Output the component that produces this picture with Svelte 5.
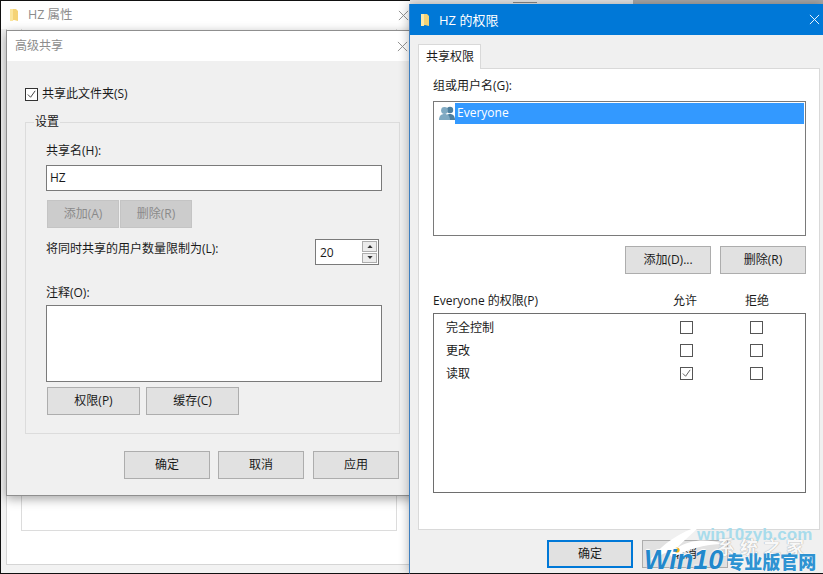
<script>
  const perms = [
    { name: '完全控制', allow: false },
    { name: '更改', allow: false },
    { name: '读取', allow: true },
  ];
</script>

<div class="desktop">
  <!-- back window: HZ 属性 -->
  <section class="win back">
    <header class="title">
      <svg class="folder" viewBox="0 0 10 14"><path d="M1 1h6l2 2v10l-4-1-4 1z" fill="#f5d376"/><path d="M1 1h3v12H1z" fill="#fbe59c"/></svg>
      <span>HZ 属性</span>
      <svg class="close" viewBox="0 0 12 12"><path d="M1 1l10 10M11 1L1 11" stroke="#8a8a8a" fill="none"/></svg>
    </header>
    <div class="back-panel">
      <div class="back-box"></div>
    </div>
  </section>

  <!-- 高级共享 -->
  <section class="win adv">
    <header class="title plain">
      <span>高级共享</span>
      <svg class="close" viewBox="0 0 12 12"><path d="M1 1l10 10M11 1L1 11" stroke="#8a8a8a" fill="none"/></svg>
    </header>
    <div class="adv-body">
      <label class="share-check">
        <span class="check dark"><svg viewBox="0 0 12 12"><path d="M2 6l3 3 5-7" stroke="#333" fill="none"/></svg></span>
        共享此文件夹(S)
      </label>
      <fieldset>
        <legend>设置</legend>
        <div class="lbl">共享名(H):</div>
        <div class="field">HZ</div>
        <div class="btns tight">
          <button class="btn small" disabled>添加(A)</button>
          <button class="btn small" disabled>删除(R)</button>
        </div>
        <div class="limit">
          <span>将同时共享的用户数量限制为(L):</span>
          <div class="spin">
            <span>20</span>
            <div class="arrows">
              <i><svg viewBox="0 0 7 4"><path d="M3.5 0L7 4H0z" fill="#333"/></svg></i>
              <i><svg viewBox="0 0 7 4"><path d="M0 0h7L3.5 4z" fill="#333"/></svg></i>
            </div>
          </div>
        </div>
        <div class="lbl note">注释(O):</div>
        <div class="notes"></div>
        <div class="btns wide">
          <button class="btn mid">权限(P)</button>
          <button class="btn mid">缓存(C)</button>
        </div>
      </fieldset>
      <footer class="foot">
        <button class="btn">确定</button>
        <button class="btn">取消</button>
        <button class="btn">应用</button>
      </footer>
    </div>
  </section>

  <div class="strip"><i></i></div>

  <!-- HZ 的权限 -->
  <section class="win perm">
    <header class="title blue">
      <svg class="folder" viewBox="0 0 10 14"><path d="M1 1h6l2 2v10l-4-1-4 1z" fill="#f5d376"/><path d="M1 1h3v12H1z" fill="#fde9a8"/></svg>
      <span>HZ 的权限</span>
      <svg class="close" viewBox="0 0 12 12"><path d="M1 1l10 10M11 1L1 11" stroke="#fff" fill="none"/></svg>
    </header>
    <div class="perm-body">
      <div class="tab">共享权限</div>
      <div class="panel">
        <div class="lbl">组或用户名(G):</div>
        <div class="users">
          <svg class="people" viewBox="0 0 16 15">
            <circle cx="11" cy="4" r="3.2" fill="#4d7f9e"/><path d="M6 14c0-4 2-6 5-6s5 2 5 6z" fill="#4d7f9e"/>
            <circle cx="5.5" cy="4.5" r="3.4" fill="#7fa9c2"/><path d="M0 14c0-4 2-6 5.5-6s5.5 2 5.5 6z" fill="#7fa9c2"/>
          </svg>
          <span class="sel">Everyone</span>
        </div>
        <div class="btns right">
          <button class="btn">添加(D)...</button>
          <button class="btn">删除(R)</button>
        </div>
        <div class="phead">
          <span class="pname">Everyone 的权限(P)</span>
          <span class="pcol">允许</span>
          <span class="pcol">拒绝</span>
        </div>
        <div class="plist">
          {#each perms as p}
            <div class="prow">
              <span class="pname">{p.name}</span>
              <span class="pcol"><span class="check">
                {#if p.allow}<svg viewBox="0 0 12 12"><path d="M2 6l3 3 5-7" stroke="#555" fill="none"/></svg>{/if}
              </span></span>
              <span class="pcol"><span class="check"></span></span>
            </div>
          {/each}
        </div>
      </div>
      <footer class="foot perm-foot">
        <button class="btn primary">确定</button>
        <button class="btn">取消</button>
      </footer>
    </div>
  </section>

  <!-- site watermark over the corner -->
  <div class="mark">
    <svg class="swirl" viewBox="0 0 181 60">
      <path d="M8 46C20 30 38 18 58 12 48 22 40 28 35 34 47 26 64 24 82 30 62 30 44 36 30 44L26 38C20 40 14 44 8 46z" fill="#fff"/>
      <circle cx="35" cy="36" r="2.6" fill="#f7b21c"/>
    </svg>
    <span class="url">win10zyb.com</span>
    <span class="home">系统之家</span>
    <div class="brand"><em>Win10</em><b>专业版官网</b></div>
  </div>
</div>

<style>
  :global(body) {
    margin: 0;
    background: #fff;
  }
  .desktop {
    position: relative;
    width: 823px;
    height: 574px;
    overflow: hidden;
    background: #111;
    font: 12px/16px "Open Sans", "Noto Sans CJK SC", sans-serif;
    color: #1a1a1a;
  }
  .win {
    position: absolute;
    box-sizing: border-box;
  }
  .title {
    display: flex;
    align-items: center;
    font-size: 12px;
    color: #8c8c8c;
  }
  .close {
    width: 11px;
    height: 11px;
    margin-left: auto;
  }
  .folder {
    width: 10px;
    height: 14px;
    margin-right: 9px;
  }

  .back {
    left: 1px;
    top: 1px;
    width: 420px;
    height: 572px;
    background: #f2f2f2;
  }
  .back .title {
    height: 28px;
    padding: 0 12px 0 8px;
    background: #fff;
    font-size: 12.5px;
  }
  .back-panel {
    box-sizing: border-box;
    height: 536px;
    margin-left: 5px;
    padding-left: 14px;
    background: #fff;
    border-left: 1px solid #d5d5d5;
    border-bottom: 1px solid #d5d5d5;
  }
  .back-box {
    box-sizing: border-box;
    width: 376px;
    height: 502px;
    border: 1px solid #dcdcdc;
    border-top: 0;
  }

  .adv {
    left: 6px;
    top: 30px;
    width: 412px;
    height: 466px;
    background: #f0f0f0;
    border: 1px solid #8f8f8f;
    box-shadow: 0 3px 10px rgba(0, 0, 0, 0.35);
  }
  .adv .title {
    height: 30px;
    background: #fff;
    padding: 0 9px 0 8px;
  }
  .adv-body {
    padding: 25px 0 0 18px;
  }
  .share-check {
    display: flex;
    align-items: center;
    gap: 4px;
    height: 16px;
  }
  .check {
    display: inline-block;
    box-sizing: border-box;
    width: 13px;
    height: 13px;
    border: 1px solid #555;
    background: #fff;
  }
  .check.dark {
    border-color: #333;
  }
  .check svg {
    display: block;
    width: 11px;
    height: 11px;
  }
  fieldset {
    box-sizing: border-box;
    width: 375px;
    height: 319px;
    margin: 13px 0 0;
    padding: 14px 17px 0 20px;
    border: 1px solid #dcdcdc;
    border-radius: 0;
  }
  legend {
    padding: 0 1px;
    margin-left: -12px;
    line-height: 14px;
    background: #f0f0f0;
  }
  .lbl {
    height: 16px;
  }
  .field {
    box-sizing: border-box;
    width: 336px;
    height: 26px;
    margin-top: 6px;
    padding: 4px 3px;
    background: #fff;
    border: 1px solid #7a7a7a;
  }
  .btns {
    display: flex;
  }
  .tight {
    gap: 1px;
    margin: 9px 0 0 1px;
  }
  .btn {
    box-sizing: border-box;
    width: 86px;
    height: 28px;
    padding: 0;
    font: inherit;
    color: #1a1a1a;
    background: #e1e1e1;
    border: 1px solid #adadad;
  }
  .btn:disabled {
    color: #8a8a8a;
    background: #cccccc;
    border-color: #c4c4c4;
  }
  .small {
    width: 72px;
  }
  .mid {
    width: 93px;
  }
  .limit {
    display: flex;
    justify-content: space-between;
    align-items: flex-start;
    width: 333px;
    margin-top: 11px;
  }
  .limit > span {
    margin-top: 2px;
  }
  .spin {
    display: flex;
    justify-content: space-between;
    box-sizing: border-box;
    width: 64px;
    height: 26px;
    padding: 1px 1px 1px 4px;
    background: #fff;
    border: 1px solid #7a7a7a;
    line-height: 24px;
  }
  .arrows {
    display: flex;
    flex-direction: column;
    gap: 1px;
  }
  .arrows i {
    display: flex;
    align-items: center;
    justify-content: center;
    box-sizing: border-box;
    width: 15px;
    height: 11px;
    background: #ececec;
    border: 1px solid #adadad;
  }
  .arrows svg {
    width: 6px;
    height: 3px;
  }
  .note {
    margin-top: 20px;
  }
  .notes {
    box-sizing: border-box;
    width: 336px;
    height: 77px;
    margin-top: 4px;
    background: #fff;
    border: 1px solid #7a7a7a;
  }
  .wide {
    gap: 6px;
    margin: 5px 0 0 1px;
  }
  .foot {
    display: flex;
    gap: 8px;
    margin: 17px 0 0 99px;
  }
  .foot .btn:last-child {
    margin-left: 1px;
  }

  .strip {
    position: absolute;
    left: 410px;
    top: 0;
    width: 413px;
    height: 4px;
    background: linear-gradient(90deg, #e6e6e6 223px, #a9a9a9 223px);
  }
  .strip i {
    display: block;
    width: 24px;
    height: 2px;
    margin-left: 103px;
    border-bottom: 1px solid #888;
  }

  .perm {
    left: 409px;
    top: 4px;
    width: 414px;
    height: 570px;
    background: #f0f0f0;
    border-left: 1px solid #3f7fbf;
    border-bottom: 1px solid #111;
    box-shadow: 0 0 10px rgba(0, 0, 0, 0.3);
  }
  .title.blue {
    height: 31px;
    padding: 0 3px 0 10px;
    background: #0078d7;
    color: #fff;
    font-size: 13px;
  }
  .perm-body {
    padding: 9px 3px 0 8px;
  }
  .tab {
    box-sizing: border-box;
    width: 63px;
    height: 25px;
    padding: 4px 0 0 7px;
    background: #fff;
    border: 1px solid #d9d9d9;
    border-bottom: 0;
    margin-bottom: -1px;
    position: relative;
  }
  .panel {
    box-sizing: border-box;
    height: 462px;
    padding: 9px 13px 0 14px;
    background: #fff;
    border: 1px solid #d9d9d9;
  }
  .users {
    display: flex;
    box-sizing: border-box;
    height: 135px;
    margin-top: 7px;
    padding: 1px 1px 0 5px;
    border: 1px solid #7a7a7a;
  }
  .people {
    width: 16px;
    height: 15px;
    margin: 3px 0 0 0;
  }
  .sel {
    flex: 1;
    height: 21px;
    padding-left: 2px;
    background: #3399ff;
    color: #fff;
    line-height: 20px;
  }
  .right {
    justify-content: flex-end;
    gap: 9px;
    margin-top: 10px;
  }
  .phead,
  .prow {
    display: flex;
    align-items: center;
  }
  .phead {
    height: 16px;
    margin-top: 19px;
    padding-right: 13px;
  }
  .phead .pcol {
    width: 72px;
  }
  .pname {
    flex: 1;
  }
  .pcol {
    display: flex;
    justify-content: center;
    width: 70px;
  }
  .plist {
    box-sizing: border-box;
    height: 180px;
    margin-top: 4px;
    padding: 2px 14px 0 12px;
    border: 1px solid #6e6e6e;
  }
  .prow {
    height: 23px;
  }
  .perm-foot {
    margin: 10px 0 0 129px;
  }
  .primary {
    border: 2px solid #0078d7;
  }

  .mark {
    position: absolute;
    right: 0;
    bottom: 0;
    width: 181px;
    height: 60px;
  }
  .swirl {
    position: absolute;
    left: 0;
    top: 0;
    width: 181px;
    height: 60px;
  }
  .url {
    position: absolute;
    left: 55px;
    top: 13px;
    font: bold 17px/16px "Liberation Sans", sans-serif;
    color: #a8dcec;
    white-space: nowrap;
  }
  .home {
    position: absolute;
    left: 75px;
    top: 23px;
    font: bold 18px/18px "Noto Sans CJK SC", sans-serif;
    letter-spacing: 5px;
    color: #f8f8f8;
    text-shadow: 0 0 1px #888;
    white-space: nowrap;
  }
  .brand {
    position: absolute;
    left: 2px;
    bottom: 0;
    display: flex;
    align-items: baseline;
    gap: 3px;
    white-space: nowrap;
  }
  .brand em {
    font: italic bold 27px/28px "Liberation Sans", sans-serif;
    color: #2288cc;
    text-shadow: 0 -1px 1px #fff;
  }
  .brand b {
    font: 900 18px/20px "Noto Sans CJK SC", sans-serif;
    color: #2f93d2;
    text-shadow: 0 0 2px #fff;
  }
</style>
